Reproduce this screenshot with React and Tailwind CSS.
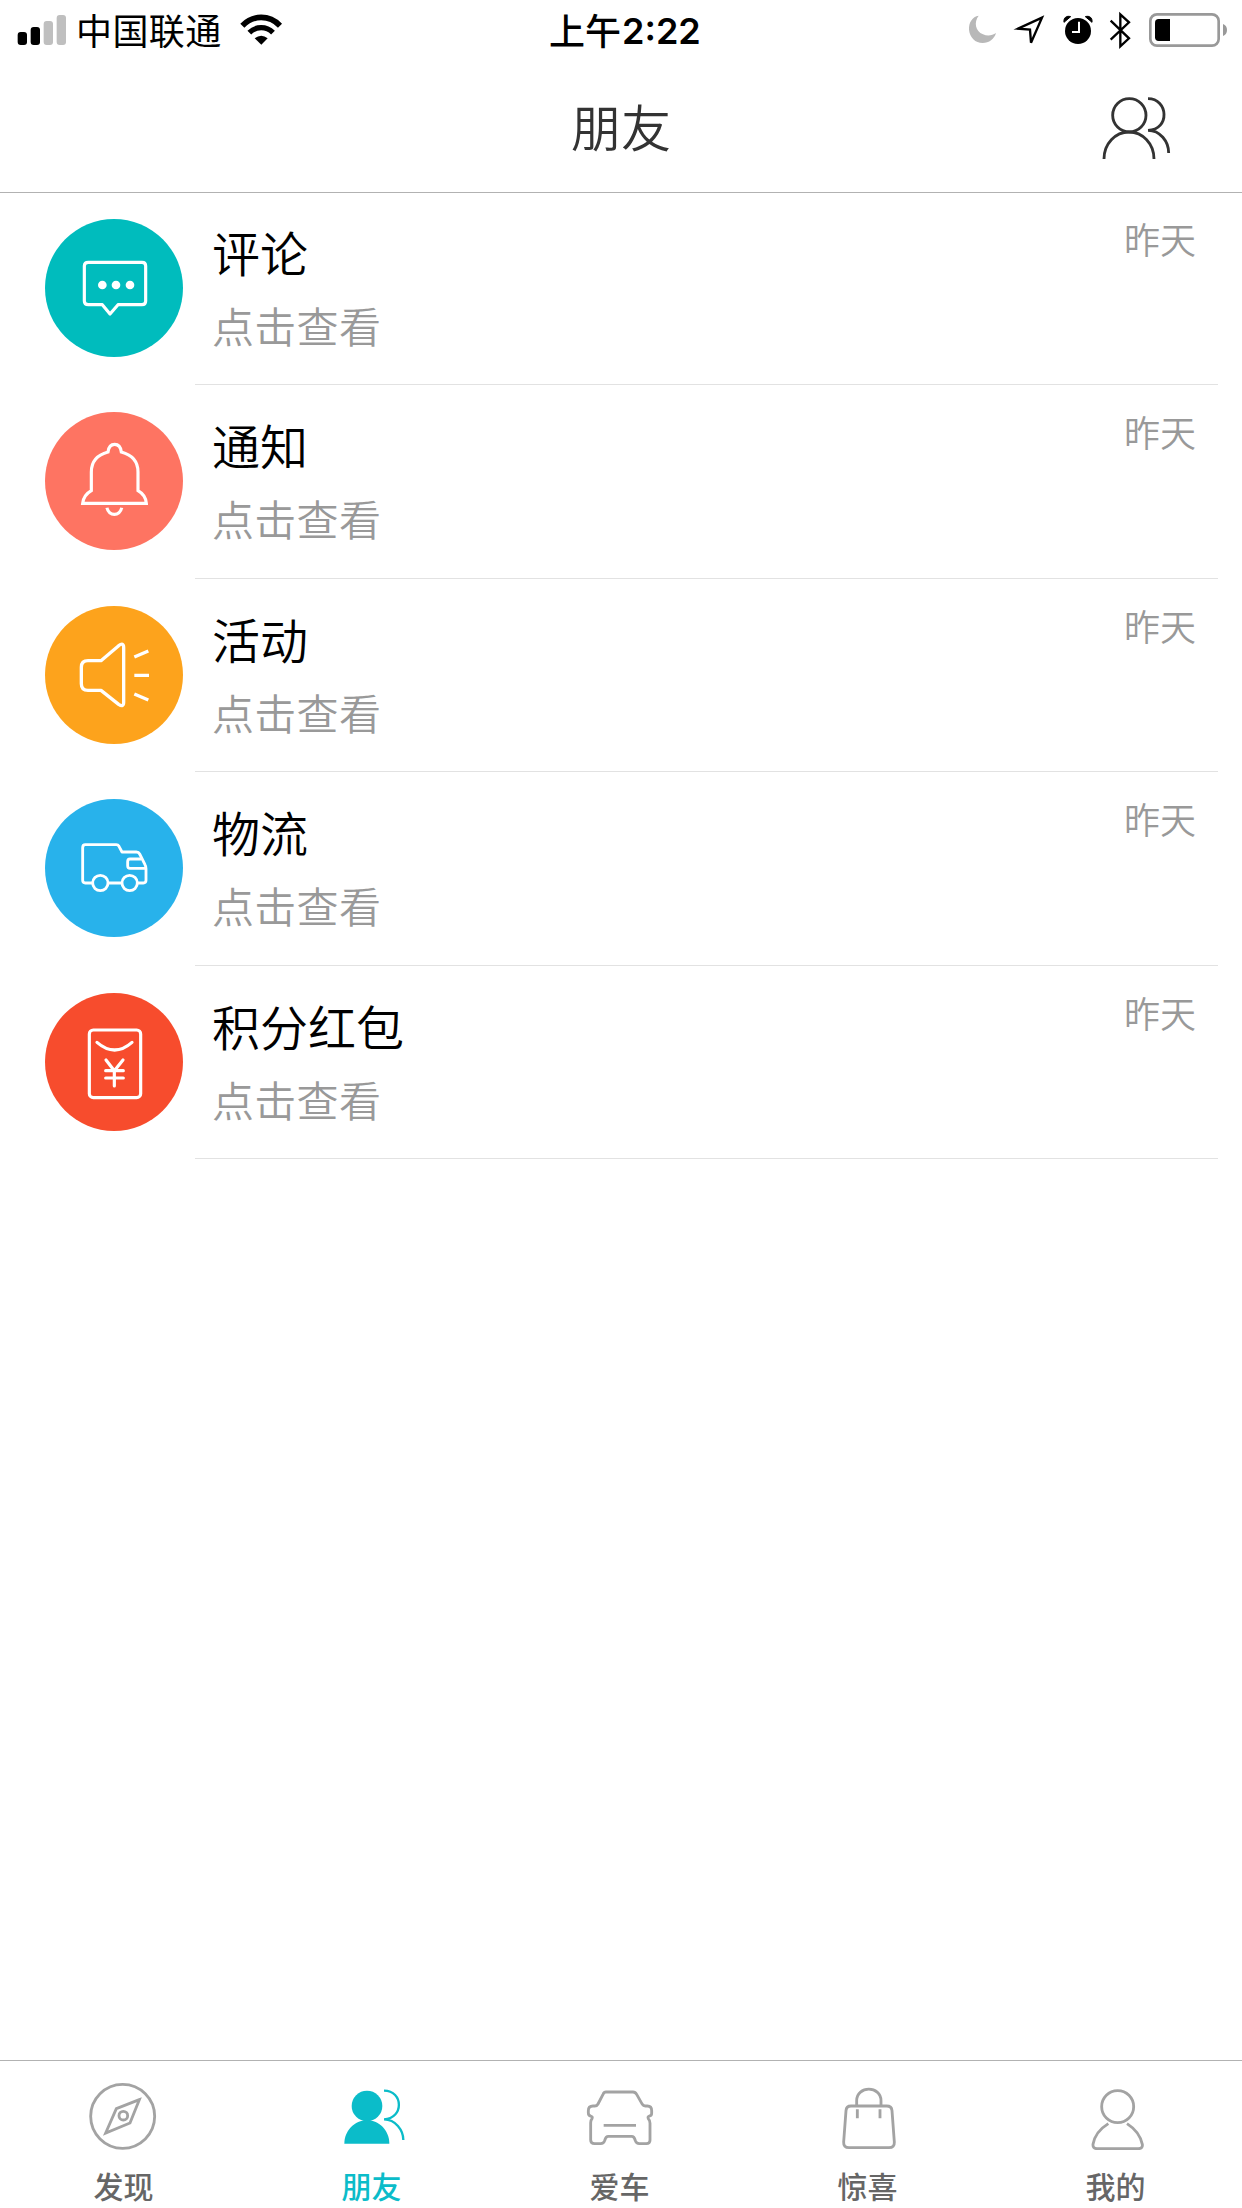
const cjk = 'font-["Noto_Sans_CJK_SC",sans-serif]';

function CommentIcon() {
  return (
    <svg viewBox="45 57 414 414" className="size-full" fill="none" stroke="#fff" strokeWidth="9.5" strokeLinejoin="round">
      <path d="M175 187H336Q347 187 347 198V303Q347 314 336 314H264L240 342L217 314H175Q163 314 163 303V198Q163 187 175 187Z" />
      <g fill="#fff" stroke="none">
        <circle cx="217" cy="255" r="13" />
        <circle cx="258" cy="255" r="13" />
        <circle cx="300" cy="255" r="13" />
      </g>
    </svg>
  );
}

function BellIcon() {
  return (
    <svg viewBox="45 66 414 414" className="size-full" fill="none" stroke="#fff" strokeWidth="9.5">
      <path d="M158 340H349Q347 315 324 302V246C324 214 304 194 274 186C272 170 265 163 254 163C243 163 236 170 234 186C204 194 184 214 184 246V302Q161 315 158 340Z" />
      <path d="M231 353C236 380 270 380 275 353" />
    </svg>
  );
}

function SpeakerIcon() {
  return (
    <svg viewBox="45 47 414 414" className="size-full" fill="none" stroke="#fff" strokeWidth="10" strokeLinejoin="round">
      <path d="M174 211H213L266 166Q281 155 281 172V336Q281 352 266 342L213 300H174Q154 300 154 280V231Q154 211 174 211Z" />
      <path d="M313 200L355 182M313 255H357M313 311L355 329" />
    </svg>
  );
}

function TruckIcon() {
  return (
    <svg viewBox="45 58 414 414" className="size-full" fill="none" stroke="#fff" strokeWidth="8.5" strokeLinejoin="round">
      <path d="M187 310H166Q158 310 158 302V204Q158 195 166 195H259Q264 195 267 200L276 217H319Q326 217 329 223L345 255Q348 260 348 267V302Q348 310 340 310H323M235 310H277" />
      <path d="M333 238H300Q293 238 293 246V258Q293 266 300 266H347" />
      <circle cx="211" cy="310" r="23" />
      <circle cx="299" cy="310" r="23" />
    </svg>
  );
}

function PacketIcon() {
  return (
    <svg viewBox="45 68 414 414" className="size-full" fill="none" stroke="#fff" strokeWidth="9.5" strokeLinecap="round" strokeLinejoin="round">
      <rect x="178" y="179" width="154" height="203" rx="12" />
      <path d="M201 216Q254 262 306 216" />
      <path d="M228 269L253 301L279 269M253 301V347M227 301H280M227 323H280" />
    </svg>
  );
}

function FriendsIcon() {
  return (
    <svg viewBox="450 279 222 204" className="h-[68px] w-[74px]" fill="none" stroke="#333" strokeWidth="8.5">
      <circle cx="538" cy="346" r="50" />
      <path d="M462 477C462 431 496 396 537 396S612 431 612 477" />
      <path d="M594 296C655 296 661 389 594 391C630 391 656 424 656 459" />
    </svg>
  );
}

const rows = [
  { title: "评论", color: "bg-[#00bcbd]", height: "h-[193px]", Icon: CommentIcon },
  { title: "通知", color: "bg-[#fe7462]", height: "h-[194px]", Icon: BellIcon },
  { title: "活动", color: "bg-[#fda31c]", height: "h-[193px]", Icon: SpeakerIcon },
  { title: "物流", color: "bg-[#28b2eb]", height: "h-[194px]", Icon: TruckIcon },
  { title: "积分红包", color: "bg-[#f74c2d]", height: "h-[193px]", Icon: PacketIcon },
];

const tabs = [
  {
    label: "发现",
    box: "72 60 240 240",
    art: (
      <>
        <circle cx="188" cy="199" r="96" />
        <path d="M238 149L169 176L137 249L210 219Z" />
        <circle cx="190" cy="197" r="13" />
      </>
    ),
  },
  {
    label: "朋友",
    box: "816 60 240 240",
    active: true,
    art: (
      <>
        <g fill="currentColor" stroke="none">
          <circle cx="921" cy="168" r="46" />
          <path d="M853 281C853 242 884 211 921 211S988 242 988 281Z" />
        </g>
        <path strokeWidth="7" d="M972 122C1031 122 1032 206 972 208C1006 208 1030 240 1030 270" />
      </>
    ),
  },
  {
    label: "爱车",
    box: "60 60 240 240",
    art: (
      <>
        <path d="M138 126H219Q226 126 230 133L247 163Q250 168 256 168H262Q275 168 275 182V190Q275 198 268 198Q262 200 265 206Q270 211 270 220V271Q270 281 259 281H238Q229 281 226 272Q223 259 215 259H145Q137 259 134 272Q131 281 122 281H104Q92 281 92 270V218Q92 211 96 206Q99 200 92 198Q85 197 85 189V182Q85 168 99 168H104Q111 168 114 162L129 133Q132 126 138 126Z" />
        <path d="M131 226H228" />
      </>
    ),
  },
  {
    label: "惊喜",
    box: "804 60 240 240",
    art: (
      <>
        <path d="M873 168H980Q995 168 996 182L1003 276Q1004 293 987 293H867Q850 293 851 276L858 182Q859 168 873 168Z" />
        <path d="M890 168V152C890 106 963 106 963 152V168" />
        <path d="M892 178V205M960 178V205" />
      </>
    ),
  },
  {
    label: "我的",
    box: "108 60 240 240",
    art: (
      <>
        <circle cx="233" cy="170" r="48" />
        <path d="M205 221C179 237 163 260 159 283Q158 296 171 296H295Q309 296 307 283C302 260 286 237 261 221" />
      </>
    ),
  },
];

function StatusBar() {
  return (
    <div className="grid h-[60px] grid-cols-[550px_1fr_276px] text-black">
      <div className="flex items-start">
        <svg viewBox="45 0 171 180" className="ml-[15px] h-[60px] w-[57px]">
          <rect x="53" y="96" width="28" height="39" rx="9" />
          <rect x="92" y="81" width="28" height="54" rx="9" />
          <g fill="#bfbfbf">
            <rect x="131" y="63" width="28" height="72" rx="9" />
            <rect x="170" y="45" width="28" height="90" rx="9" />
          </g>
        </svg>
        <span className={`${cjk} ml-[4px] mt-[11px] w-[161px] whitespace-nowrap text-[36px] leading-[36px] tracking-[0.4px]`}>中国联通</span>
        <svg viewBox="711 0 147 180" className="h-[60px] w-[49px]" fill="none" stroke="#000">
          <path d="M727 77C759 44 808 44 840 77" strokeWidth="17" />
          <path d="M748 98C768 78 799 78 819 98" strokeWidth="16" />
          <path d="M764 115Q784 99 803 115L784 134Z" fill="#000" stroke="none" />
        </svg>
      </div>
      <div className="flex items-start whitespace-nowrap">
        <span className={`${cjk} -ml-px mt-[11px] w-[73px] text-[36px] font-medium leading-[36px]`}>上午</span>
        <span className="mt-[13px] font-['Inter',sans-serif] text-[36px] font-semibold leading-[36px]">2:22</span>
      </div>
      <div className="flex items-start">
        <svg viewBox="48 0 126 153" className="h-[51px] w-[42px]">
          <path d="M86 47C67 50 56 67 57 89C59 112 76 129 98 129C117 129 133 117 138 99C127 107 112 109 99 103C76 93 71 67 86 47Z" fill="#b8b8b8" />
        </svg>
        <svg viewBox="174 0 153 153" className="h-[51px] w-[51px]">
          <path d="M276 53L204 86L240 89L243 128Z" fill="none" stroke="#000" strokeWidth="7" />
        </svg>
        <svg viewBox="327 0 126 153" className="h-[51px] w-[42px]">
          <circle cx="384" cy="93" r="39" />
          <path d="M342 67C340 53 350 46 362 50ZM426 67C428 53 418 46 406 50Z" stroke="#000" strokeWidth="3" />
          <path d="M387 65V96H366" fill="none" stroke="#fff" strokeWidth="6" />
        </svg>
        <svg viewBox="453 0 120 153" className="h-[51px] w-[40px]" fill="none" stroke="#000" strokeWidth="7">
          <path d="M482 62L537 115L511 139V43L537 67L482 119" />
        </svg>
        <svg viewBox="573 0 303 153" className="h-[51px] w-[101px]">
          <rect x="601" y="43" width="205" height="94" rx="20" fill="none" stroke="#999" strokeWidth="8" />
          <path d="M660 57V123H626Q615 123 615 112V68Q615 57 626 57Z" />
          <path d="M819 72Q831 77 831 90T819 108Z" fill="#999" />
        </svg>
      </div>
    </div>
  );
}

function MessageRow({ title, color, height, Icon }) {
  return (
    <li className={`flex pl-[45px] pr-6 ${height}`}>
      <div className={`mt-[27px] size-[138px] shrink-0 rounded-full ${color}`}>
        <Icon />
      </div>
      <div className="ml-3 flex flex-1 justify-between border-b border-[#e2e2e2] pl-[17px] pr-[22px]">
        <div>
          <h2 className="mt-[35px] text-[48px] font-[350] leading-[48px] text-black">{title}</h2>
          <p className="mt-[29px] text-[42px] font-[350] leading-[42px] tracking-[0.3px] text-[#999]">点击查看</p>
        </div>
        <time className="mt-7 text-[36px] font-[350] leading-[36px] text-[#999]">昨天</time>
      </div>
    </li>
  );
}

export default function App() {
  return (
    <div className='flex h-[2208px] w-[1242px] flex-col overflow-hidden bg-white font-["Noto_Sans_CJK_SC",sans-serif]'>
      <StatusBar />
      <header className="grid h-[132px] grid-cols-3 items-start">
        <h1 className="col-start-2 mt-[40px] text-center text-[50px] font-[350] leading-[51px] text-[#333]">朋友</h1>
        <button className="mr-[68px] mt-[33px] justify-self-end" aria-label="好友">
          <FriendsIcon />
        </button>
      </header>
      <main className="flex-1">
        <div className="-mb-px h-px bg-[#b2b2b2]" />
        <ul>
          {rows.map((row) => (
            <MessageRow key={row.title} {...row} />
          ))}
        </ul>
      </main>
      <nav className="flex h-[148px] border-t border-[#b2b2b2] pr-[2px]">
        {tabs.map(({ label, box, art, active }) => (
          <button key={label} className={`flex w-[248px] flex-col items-center pt-[9px] ${active ? "text-[#0bbcc9]" : "text-[#a3a3a3]"}`}>
            <svg viewBox={box} className="size-20" fill="none" stroke="currentColor" strokeWidth="8.5">
              {art}
            </svg>
            <span className={`-ml-px mt-5 text-[30px] font-medium leading-[30px] ${active ? "" : "text-[#666]"}`}>{label}</span>
          </button>
        ))}
      </nav>
    </div>
  );
}
